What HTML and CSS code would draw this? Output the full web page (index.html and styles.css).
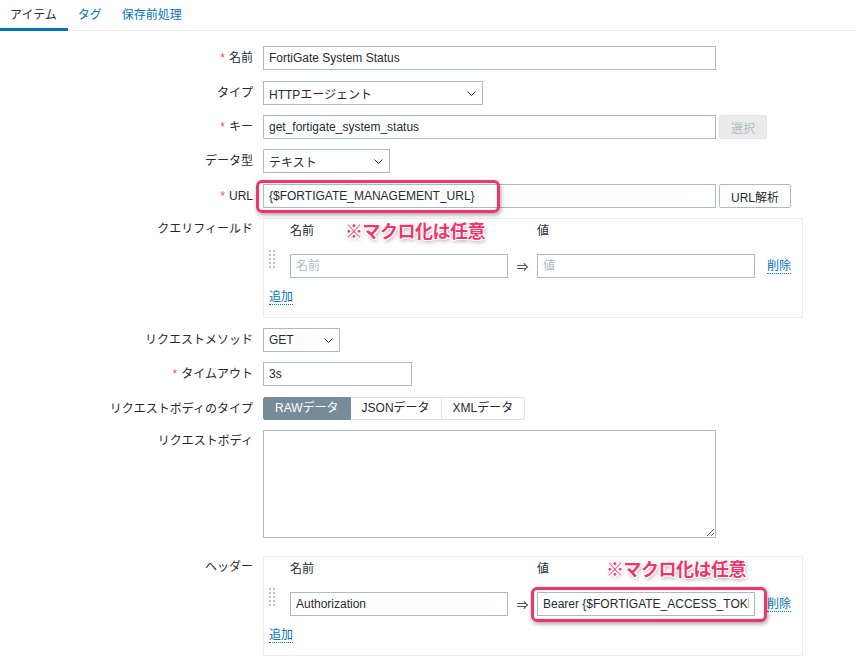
FILE: index.html
```html
<!DOCTYPE html>
<html lang="ja">
<head>
<meta charset="utf-8">
<title>アイテム</title>
<link rel="stylesheet" href="styles.css">
</head>
<body>
<div class="page">
  <nav class="tabs">
    <a class="tab active">アイテム</a>
    <a class="tab">タグ</a>
    <a class="tab">保存前処理</a>
  </nav>

  <div class="form">
    <div class="row">
      <label class="lbl"><span class="req">*</span>名前</label>
      <div class="fld"><input class="inp w453" type="text" value="FortiGate System Status"></div>
    </div>
    <div class="row sp11">
      <label class="lbl">タイプ</label>
      <div class="fld"><div class="select w220"><span>HTTPエージェント</span><svg class="chev" width="9" height="5" viewBox="0 0 9 5"><path d="M0.5 0.5L4.5 4.5L8.5 0.5" fill="none" stroke="#1f2c33" stroke-width="1"/></svg></div></div>
    </div>
    <div class="row">
      <label class="lbl"><span class="req">*</span>キー</label>
      <div class="fld"><input class="inp w453" type="text" value="get_fortigate_system_status"><button class="btn disabled">選択</button></div>
    </div>
    <div class="row">
      <label class="lbl">データ型</label>
      <div class="fld"><div class="select w127"><span>テキスト</span><svg class="chev" width="9" height="5" viewBox="0 0 9 5"><path d="M0.5 0.5L4.5 4.5L8.5 0.5" fill="none" stroke="#1f2c33" stroke-width="1"/></svg></div></div>
    </div>
    <div class="row sp11">
      <label class="lbl"><span class="req">*</span>URL</label>
      <div class="fld"><input class="inp w453" type="text" value="{$FORTIGATE_MANAGEMENT_URL}"><button class="btn">URL解析</button></div>
    </div>
    <div class="row">
      <label class="lbl top">クエリフィールド</label>
      <div class="fld">
        <div class="pairs">
          <div class="phead"><span class="c-handle"></span><span class="c-name">名前</span><span class="c-arrow"></span><span class="c-val">値</span></div>
          <div class="prow">
            <span class="c-handle"><span class="dots"></span></span>
            <input class="inp c-name" type="text" placeholder="名前">
            <span class="c-arrow">⇒</span>
            <input class="inp c-val" type="text" placeholder="値">
            <a class="link del">削除</a>
          </div>
          <div class="padd"><a class="link">追加</a></div>
        </div>
      </div>
    </div>
    <div class="row">
      <label class="lbl">リクエストメソッド</label>
      <div class="fld"><div class="select w77"><span>GET</span><svg class="chev" width="9" height="5" viewBox="0 0 9 5"><path d="M0.5 0.5L4.5 4.5L8.5 0.5" fill="none" stroke="#1f2c33" stroke-width="1"/></svg></div></div>
    </div>
    <div class="row">
      <label class="lbl"><span class="req">*</span>タイムアウト</label>
      <div class="fld"><input class="inp w149" type="text" value="3s"></div>
    </div>
    <div class="row sp11">
      <label class="lbl">リクエストボディのタイプ</label>
      <div class="fld">
        <div class="seg">
          <span class="opt on">RAWデータ</span><span class="opt">JSONデータ</span><span class="opt">XMLデータ</span>
        </div>
      </div>
    </div>
    <div class="row">
      <label class="lbl top">リクエストボディ</label>
      <div class="fld"><textarea class="ta"></textarea></div>
    </div>
    <div class="row sp18">
      <label class="lbl top">ヘッダー</label>
      <div class="fld">
        <div class="pairs">
          <div class="phead"><span class="c-handle"></span><span class="c-name">名前</span><span class="c-arrow"></span><span class="c-val">値</span></div>
          <div class="prow">
            <span class="c-handle"><span class="dots"></span></span>
            <input class="inp c-name" type="text" value="Authorization">
            <span class="c-arrow">⇒</span>
            <input class="inp c-val" type="text" value="Bearer {$FORTIGATE_ACCESS_TOKEN}">
            <a class="link del">削除</a>
          </div>
          <div class="padd"><a class="link">追加</a></div>
        </div>
      </div>
    </div>
  </div>

  <div class="hl hl-url"></div>
  <div class="note note-url">※マクロ化は任意</div>
  <div class="hl hl-hdr"></div>
  <div class="note note-hdr">※マクロ化は任意</div>
</div>
</body>
</html>
```
FILE: styles.css
```css
html, body {
  margin: 0;
  padding: 0;
  background: #ffffff;
}
body {
  font-family: "Liberation Sans", Arial, "Noto Sans CJK JP", sans-serif;
  font-size: 12px;
  color: #1f2c33;
  width: 856px;
  height: 664px;
  overflow: hidden;
}
.page {
  position: relative;
  width: 856px;
  height: 664px;
}

/* tabs */
.tabs {
  display: flex;
  height: 30px;
  border-bottom: 1px solid #ebeef0;
}
.tab {
  position: relative;
  display: block;
  padding: 0 10px 0 10px;
  line-height: 30px;
  height: 30px;
  color: #0275b8;
  cursor: pointer;
}
.tab:first-child {
  padding-right: 11px;
}
.tab.active {
  color: #1f2c33;
}
.tab.active::after {
  content: "";
  position: absolute;
  left: 0;
  right: 0;
  bottom: -1px;
  height: 3px;
  background: #0275b8;
}

/* form */
.form {
  display: flex;
  flex-direction: column;
  padding-top: 15px;
}
.row {
  display: flex;
  align-items: center;
  margin-top: 10px;
}
.row:first-child { margin-top: 0; }
.row.sp11 { margin-top: 11px; }
.row.sp18 { margin-top: 18px; }
.lbl {
  width: 253px;
  padding-right: 10px;
  text-align: right;
  line-height: 14px;
  flex: none;
  white-space: nowrap;
}
.lbl.top {
  align-self: flex-start;
  padding-top: 4px;
}
.req {
  color: #e45959;
  margin-right: 4px;
}
.fld {
  display: flex;
  align-items: center;
  gap: 3px;
}

.inp {
  box-sizing: border-box;
  height: 24px;
  border: 1px solid #acbbc2;
  background: #ffffff;
  padding: 0 5px;
  font-family: "Liberation Sans", Arial, "Noto Sans CJK JP", sans-serif;
  font-size: 12px;
  color: #1f2c33;
  outline: none;
  margin: 0;
}
.inp::placeholder {
  color: #acbbc2;
}
.w453 { width: 453px; }
.w149 { width: 149px; }

.select {
  box-sizing: border-box;
  height: 24px;
  border: 1px solid #acbbc2;
  padding: 0 6px 0 5px;
  display: flex;
  align-items: center;
  justify-content: space-between;
  background: #fff;
}
.w220 { width: 220px; }
.w127 { width: 127px; }
.w77 { width: 77px; }
.chev { display: block; }

.btn {
  box-sizing: border-box;
  height: 24px;
  padding: 0 11px;
  border: 1px solid #acbbc2;
  background: #ffffff;
  font-family: "Liberation Sans", Arial, "Noto Sans CJK JP", sans-serif;
  font-size: 12px;
  color: #1f2c33;
  margin: 0;
  border-radius: 2px;
}
.btn.disabled {
  background: #ebebeb;
  border-color: #dfe4e7;
  color: #acbbc2;
  width: 48px;
  padding: 0;
}

/* key/value box */
.pairs {
  box-sizing: border-box;
  width: 540px;
  height: 100px;
  border: 1px solid #ebeef0;
  padding: 5px 5px 0 5px;
}
.phead, .prow {
  display: flex;
  align-items: center;
}
.phead { line-height: 14px; height: 14px; }
.prow { margin-top: 16px; height: 24px; }
.c-handle {
  width: 21px;
  flex: none;
  align-self: stretch;
  position: relative;
}
.c-name { width: 218px; flex: none; }
.c-arrow { width: 29px; flex: none; text-align: center; font-size: 12px; }
.c-val { width: 218px; flex: none; }
.dots {
  position: absolute;
  left: 0;
  top: -4px;
  width: 6px;
  height: 18px;
  background-image: radial-gradient(circle, #acbbc2 0 1px, transparent 1.1px);
  background-image: linear-gradient(#b6c2c8, #b6c2c8);
  -webkit-mask: repeating-linear-gradient(to bottom, #000 0 2px, transparent 2px 4px), repeating-linear-gradient(to right, #000 0 2px, transparent 2px 4px);
  -webkit-mask-composite: source-in;
  mask-composite: intersect;
}
.link {
  color: #0275b8;
  border-bottom: 1px dotted #0275b8;
  cursor: pointer;
  line-height: 14px;
}
.del { margin-left: 12px; }
.padd {
  margin-top: 12px;
  line-height: 14px;
}

/* segmented */
.seg {
  display: flex;
  height: 23px;
  box-sizing: border-box;
}
.opt {
  box-sizing: border-box;
  height: 23px;
  line-height: 21px;
  padding: 0 11px;
  border: 1px solid #dfe4e7;
  border-left: none;
  background: #fff;
  color: #1f2c33;
}
.opt:first-child { border-left: 1px solid #768d99; border-radius: 2px 0 0 2px; }
.opt:last-child { border-radius: 0 2px 2px 0; }
.opt.on {
  background: #768d99;
  border-color: #768d99;
  color: #ffffff;
}

.ta {
  box-sizing: border-box;
  width: 453px;
  height: 108px;
  border: 1px solid #acbbc2;
  margin: 0;
  padding: 4px 5px;
  font-family: "Liberation Sans", Arial, sans-serif;
  font-size: 12px;
  display: block;
}

/* annotations */
.hl {
  position: absolute;
  box-sizing: border-box;
  border: 3px solid #f0346c;
  border-radius: 6px;
  box-shadow: 1px 2px 4px rgba(0, 0, 0, 0.35), inset 0 0 2px rgba(0,0,0,0.15);
}
.hl-url { left: 256px; top: 180px; width: 244px; height: 33px; }
.hl-hdr { left: 531px; top: 587px; width: 236px; height: 35px; }
.note {
  position: absolute;
  font-family: "Noto Sans CJK JP", sans-serif;
  font-weight: 700;
  font-size: 18px;
  line-height: 22px;
  color: #f0346c;
  letter-spacing: -0.5px;
  white-space: nowrap;
  text-shadow:
    -1px -1px 0 #fff, 1px -1px 0 #fff, -1px 1px 0 #fff, 1px 1px 0 #fff,
    0 -1px 0 #fff, 0 1px 0 #fff, -1px 0 0 #fff, 1px 0 0 #fff,
    1px 2px 4px rgba(0, 0, 0, 0.45);
}
.note-url { left: 345px; top: 219px; }
.note-hdr { left: 606px; top: 557px; }
```
